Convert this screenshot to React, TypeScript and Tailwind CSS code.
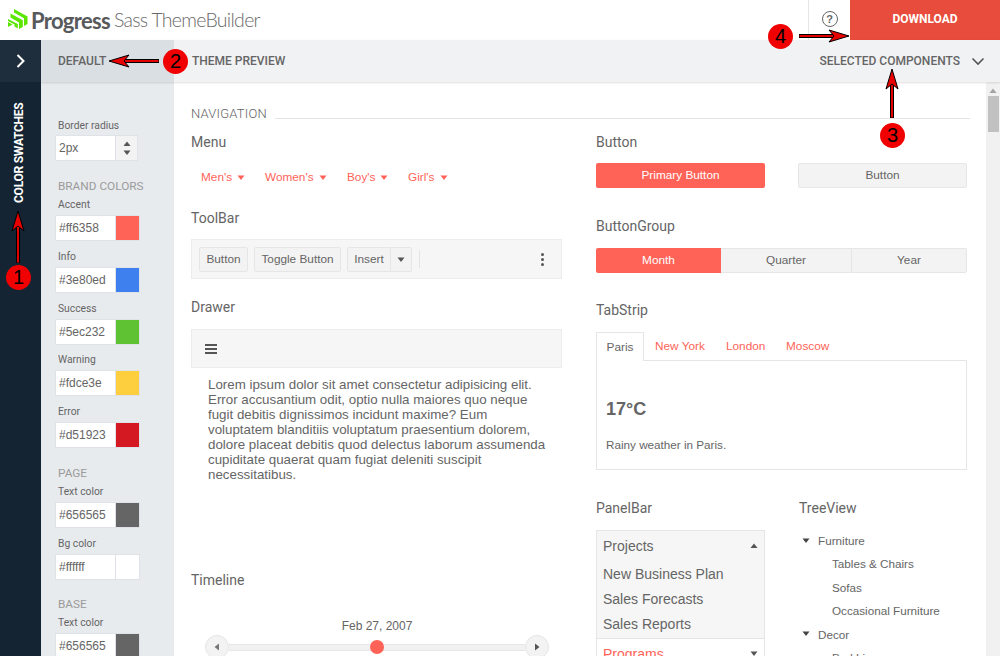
import React from "react";

const arial = "font-['Liberation_Sans',Arial,sans-serif]";
const roboto = "font-['Roboto',sans-serif]";

function Field({ label, value, color }: { label: string; value: string; color: string }) {
  return (
    <div className="mb-[8.75px]">
      <div className="h-[14px] leading-[14px] text-[10.3px] text-[#656565] pl-[3px] mb-[3px]">{label}</div>
      <div className="flex h-[26px] w-[85px] border border-[#dfe2e6] bg-white">
        <div className={`w-[59px] text-[12px] leading-[24px] pl-[3px] text-[#656565] ${arial}`}>{value}</div>
        <div className="flex-1 border-l border-[#dfe2e6]" style={{ background: color }} />
      </div>
    </div>
  );
}

function GroupTitle({ children, top }: { children: React.ReactNode; top: string }) {
  return <div className={`text-[11.8px] leading-[16px] text-[#9a9a9a] pl-[3px] ${top}`}>{children}</div>;
}

function Label({ children, className = "" }: { children: React.ReactNode; className?: string }) {
  return <div className={`text-[14px] leading-[16px] text-[#656565] ${roboto} ${className}`}>{children}</div>;
}

function Caret({ className = "", dir = "down" }: { className?: string; dir?: "down" | "up" | "left" | "right" }) {
  const pts = { down: "0.5,1.5 7.5,1.5 4,6", up: "0.5,6 7.5,6 4,1.5", left: "6,0.5 6,7.5 1.5,4", right: "2,0.5 2,7.5 6.5,4" }[dir];
  return (
    <svg width="8" height="8" viewBox="0 0 8 8" className={`fill-current shrink-0 ${className}`}>
      <polygon points={pts} />
    </svg>
  );
}

function MenuItem({ children, w }: { children: React.ReactNode; w: string }) {
  return (
    <div className={`flex items-center ${w}`}>
      <span>{children}</span>
      <Caret className="ml-[5px]" />
    </div>
  );
}

function Btn({ children, className = "" }: { children: React.ReactNode; className?: string }) {
  return (
    <div className={`h-[25px] pt-[1px] border border-[#e6e6e6] bg-[#f3f3f3] rounded-[2px] flex items-center justify-center text-[11.8px] text-[#656565] ${className}`}>
      {children}
    </div>
  );
}

function Marker({ n, className }: { n: number; className: string }) {
  return (
    <div className={`absolute z-20 w-[25px] h-[25px] rounded-full bg-[#f00000] text-black text-[20px] leading-[25px] text-center ${arial} ${className}`}>
      {n}
    </div>
  );
}

function Arrow({ className, dir, len }: { className: string; dir: "up" | "left" | "right"; len: number }) {
  const horizontal = dir !== "up";
  const w = horizontal ? len : 16;
  const h = horizontal ? 16 : len;
  let head = "";
  let shaft = { x: 0, y: 0, w: 0, h: 0 };
  if (dir === "up") {
    head = `8,0 14,20 8,15 2,20`;
    shaft = { x: 6.5, y: 14, w: 3, h: len - 14 };
  } else if (dir === "left") {
    head = `0,8 20,2 15,8 20,14`;
    shaft = { x: 14, y: 6.5, w: len - 14, h: 3 };
  } else {
    head = `${len},8 ${len - 20},2 ${len - 15},8 ${len - 20},14`;
    shaft = { x: 0, y: 6.5, w: len - 14, h: 3 };
  }
  return (
    <svg width={w} height={h} viewBox={`0 0 ${w} ${h}`} className={`absolute z-20 ${className}`}>
      <rect x={shaft.x} y={shaft.y} width={shaft.w} height={shaft.h} fill="#e00000" stroke="#000" strokeWidth="1" />
      <polygon points={head} fill="#e80000" stroke="#000" strokeWidth="1" />
    </svg>
  );
}

function TreeRow({ children, head = false }: { children: React.ReactNode; head?: boolean }) {
  return (
    <div className={`h-[23.4px] leading-[23.4px] flex items-center text-[11.7px] text-[#656565] ${head ? "" : "pl-[31px]"}`}>
      {head && <Caret className="ml-[1px] mr-[8px] text-[#444]" />}
      <span>{children}</span>
    </div>
  );
}

export default function App() {
  return (
    <div className={`relative w-[1000px] h-[656px] overflow-hidden bg-white flex flex-col ${roboto}`}>
      {/* Header */}
      <header className="h-10 shrink-0 flex items-stretch bg-white">
        <div className="flex items-center flex-1 pl-[8px]">
          <svg width="20" height="20" viewBox="0 0 20 20" className="mr-[3px] mb-[2px]">
            <polygon points="6,0 19.5,7.5 19.5,15 16,17 16,9.2 6,3.6" fill="#5ce500" />
            <polygon points="2.5,4.6 14.8,11.2 14.8,18 11,20 11,13.4 2.5,8.6" fill="#5ce500" />
            <polygon points="0,10 9.8,15 9.8,19.5 6.5,17.6 6.5,15.4 0,12" fill="#5ce500" />
            <polygon points="0,13 4.5,15.5 0,18" fill="#5ce500" />
          </svg>
          <span className="text-[22px] font-bold tracking-[-0.7px] text-[#58595b] font-['Lato',sans-serif]">Progress</span>
          <span className="text-[19.5px] font-light tracking-[-0.7px] text-[#6a6a6a] ml-[4px] font-['Lato',sans-serif]">Sass ThemeBuilder</span>
        </div>
        <div className="w-[42px] border-l border-[#e6e6e6] flex items-center justify-center">
          <div className={`w-[16px] h-[16px] rounded-full border border-[#666] text-[11px] leading-[14px] font-bold text-center text-[#666] mb-[2px] ${arial}`}>?</div>
        </div>
        <div className="w-[150px] bg-[#e74c3c] text-white text-[12px] font-bold flex items-center justify-center pb-[3px]">DOWNLOAD</div>
      </header>

      {/* Body */}
      <div className="flex flex-1 min-h-0">
        {/* Rail */}
        <div className="w-[41px] shrink-0 bg-[#152433] flex flex-col items-center">
          <div className="h-[42px] w-full bg-[#1f2e3d] flex items-center justify-center">
            <svg width="12" height="14" viewBox="0 0 12 14" fill="none" stroke="white" strokeWidth="2">
              <path d="M2.5 1 L8.5 7 L2.5 13" />
            </svg>
          </div>
          <div className="mt-[19px] mr-[3px] [writing-mode:vertical-rl] rotate-180 text-white text-[12.1px] font-bold tracking-[-0.3px] h-[103px] text-center">COLOR SWATCHES</div>
        </div>

        <div className="flex-1 min-w-0 flex flex-col">
          {/* Sub bar */}
          <div className="h-[42px] shrink-0 flex text-[12px] font-medium text-[#656565] shadow-[0_1px_2px_rgba(0,0,0,0.12)] z-10">
            <div className="w-[133px] bg-[#dadfe3] flex items-center pl-[17px]">DEFAULT</div>
            <div className="flex-1 bg-[#f1f2f4] flex items-center pl-[18px] pr-[15px]">
              <span>THEME PREVIEW</span>
              <span className="ml-auto">SELECTED COMPONENTS</span>
              <svg width="14" height="9" viewBox="0 0 14 9" fill="none" stroke="#555" strokeWidth="1.6" className="ml-[11px]">
                <path d="M1.5 1.5 L7 7 L12.5 1.5" />
              </svg>
            </div>
          </div>

          <div className="flex-1 min-h-0 flex">
            {/* Sidebar */}
            <aside className="w-[133px] shrink-0 bg-[#e8ebee] pl-[14px] pt-[37px] overflow-hidden">
              <div className="h-[14px] leading-[14px] text-[10.3px] text-[#656565] pl-[3px] mb-[2px]">Border radius</div>
              <div className="flex h-[26px] w-[83px] border border-[#dfe2e6] bg-white">
                <div className={`w-[59px] text-[12px] leading-[24px] pl-[3px] text-[#656565] ${arial}`}>2px</div>
                <div className="flex-1 bg-[#f3f3f3] border-l border-[#dfe2e6] flex flex-col items-center justify-center gap-[1px] text-[#555]">
                  <Caret dir="up" />
                  <Caret />
                </div>
              </div>
              <GroupTitle top="mt-[17px] mb-[4px]">BRAND COLORS</GroupTitle>
              <Field label="Accent" value="#ff6358" color="#ff6358" />
              <Field label="Info" value="#3e80ed" color="#3e80ed" />
              <Field label="Success" value="#5ec232" color="#5ec232" />
              <Field label="Warning" value="#fdce3e" color="#fdce3e" />
              <Field label="Error" value="#d51923" color="#d51923" />
              <GroupTitle top="mt-[17px] mb-[4px]">PAGE</GroupTitle>
              <Field label="Text color" value="#656565" color="#656565" />
              <Field label="Bg color" value="#ffffff" color="#ffffff" />
              <GroupTitle top="mt-[16px] mb-[4px]">BASE</GroupTitle>
              <Field label="Text color" value="#656565" color="#656565" />
            </aside>

            {/* Main */}
            <main className="flex-1 min-w-0 pl-[17px] pr-[16px] pt-[23px] overflow-hidden">
              <div className="flex items-center h-[18px]">
                <span className="text-[13px] font-light text-[#656565] tracking-[0.2px]">NAVIGATION</span>
                <div className="flex-1 h-[1px] bg-[#e4e4e4] ml-[8px] mt-[8px]" />
              </div>
              <div className="flex gap-[34px] mt-[11px] w-[776px]">
                {/* Left column */}
                <div className="w-[371px] shrink-0">
                  <Label>Menu</Label>
                  <div className={`flex items-center h-[18px] mt-[19px] pl-[10px] text-[11.8px] text-[#ff6358] ${arial}`}>
                    <MenuItem w="w-[64px]">Men's</MenuItem>
                    <MenuItem w="w-[82px]">Women's</MenuItem>
                    <MenuItem w="w-[61px]">Boy's</MenuItem>
                    <MenuItem w="w-auto">Girl's</MenuItem>
                  </div>
                  <Label className="mt-[23px]">ToolBar</Label>
                  <div className={`mt-[13px] h-[40px] border border-[#ececec] bg-[#f6f6f6] flex items-center pl-[7px] pr-[17px] ${arial}`}>
                    <Btn className="w-[49px]">Button</Btn>
                    <Btn className="w-[87px] ml-[6px]">Toggle Button</Btn>
                    <div className="ml-[6px] flex">
                      <Btn className="w-[44px] rounded-r-none">Insert</Btn>
                      <Btn className="w-[21px] border-l-0 rounded-l-none"><Caret className="text-[#555]" /></Btn>
                    </div>
                    <div className="w-[1px] h-[18px] bg-[#e4e4e4] ml-[7px]" />
                    <div className="ml-auto flex flex-col gap-[2px]">
                      <span className="w-[3px] h-[3px] rounded-full bg-[#555]" />
                      <span className="w-[3px] h-[3px] rounded-full bg-[#555]" />
                      <span className="w-[3px] h-[3px] rounded-full bg-[#555]" />
                    </div>
                  </div>
                  <Label className="mt-[20px]">Drawer</Label>
                  <div className="mt-[14px] h-[39px] border border-[#ececec] bg-[#f6f6f6] flex items-center pl-[13px]">
                    <div className="w-[12px] flex flex-col gap-[2px]">
                      <span className="h-[2px] bg-[#555]" />
                      <span className="h-[2px] bg-[#555]" />
                      <span className="h-[2px] bg-[#555]" />
                    </div>
                  </div>
                  <p className={`mt-[9px] pl-[17px] pr-[12px] text-[13.33px] leading-[15px] text-[#656565] ${arial}`}>
                    Lorem ipsum dolor sit amet consectetur adipisicing elit. Error accusantium odit, optio nulla maiores quo neque fugit debitis dignissimos incidunt maxime? Eum voluptatem blanditiis voluptatum praesentium dolorem, dolore placeat debitis quod delectus laborum assumenda cupiditate quaerat quam fugiat deleniti suscipit necessitatibus.
                  </p>
                  <Label className="mt-[90px]">Timeline</Label>
                  <div className={`mt-[30px] text-center text-[12px] leading-[16px] text-[#656565] pl-[1px] ${arial}`}>Feb 27, 2007</div>
                  <div className="flex items-center mt-[1px] pl-[14px] pr-[13px]">
                    <div className="w-[24px] h-[24px] rounded-full border border-[#e6e6e6] bg-[#f3f3f3] flex items-center justify-center text-[#777]"><Caret dir="left" /></div>
                    <div className="flex-1 h-[7px] bg-[#f1f1f1] border-y border-[#e6e6e6] flex items-center justify-center">
                      <span className="w-[14px] h-[14px] rounded-full bg-[#ff6358] shrink-0" />
                    </div>
                    <div className="w-[24px] h-[24px] rounded-full border border-[#e6e6e6] bg-[#f3f3f3] flex items-center justify-center text-[#555]"><Caret dir="right" /></div>
                  </div>
                </div>

                {/* Right column */}
                <div className="w-[371px] shrink-0">
                  <Label>Button</Label>
                  <div className={`flex justify-between mt-[13px] ${arial}`}>
                    <div className="w-[169px] h-[25px] pt-[1px] rounded-[2px] bg-[#ff6358] text-white text-[11.8px] flex items-center justify-center">Primary Button</div>
                    <Btn className="w-[169px]">Button</Btn>
                  </div>
                  <Label className="mt-[30px]">ButtonGroup</Label>
                  <div className={`flex mt-[14px] h-[25px] text-[11.8px] ${arial}`}>
                    <div className="w-[125px] bg-[#ff6358] text-white rounded-l-[2px] flex items-center justify-center">Month</div>
                    <div className="w-[130px] h-[25px] border-y border-[#e6e6e6] bg-[#f3f3f3] text-[#656565] flex items-center justify-center">Quarter</div>
                    <div className="flex-1 border border-[#e6e6e6] bg-[#f3f3f3] text-[#656565] rounded-r-[2px] flex items-center justify-center">Year</div>
                  </div>
                  <Label className="mt-[29px]">TabStrip</Label>
                  <div className={`mt-[14px] flex h-[28px] text-[11.8px] text-[#ff6358] ${arial}`}>
                    <div className="w-[48px] border border-b-0 border-[#e6e6e6] text-[#656565] flex items-center justify-center relative z-10 bg-white h-[29px] pt-[1px]">Paris</div>
                    <div className="flex items-center pl-[11px] pt-[1px] w-[71px]">New York</div>
                    <div className="flex items-center pl-[11px] pt-[1px] w-[60px]">London</div>
                    <div className="flex items-center pl-[11px] pt-[1px]">Moscow</div>
                  </div>
                  <div className={`h-[110px] border border-[#e6e6e6] pl-[9px] text-[#656565] ${arial}`}>
                    <div className="mt-[37px] text-[18px] font-bold leading-[22px]">17°C</div>
                    <div className="mt-[17px] text-[11.7px] leading-[16px]">Rainy weather in Paris.</div>
                  </div>
                  <div className="flex mt-[30px]">
                    <div className="w-[169px] shrink-0">
                      <Label>PanelBar</Label>
                      <div className={`mt-[14px] border-x border-t border-[#e6e6e6] text-[14px] text-[#656565] ${arial}`}>
                        <div className="bg-[#f6f6f6] pb-[1px] border-b border-[#e6e6e6]">
                          <div className="h-[30px] flex items-center pl-[6px] pr-[6px]">
                            <span>Projects</span>
                            <Caret dir="up" className="ml-auto text-[#555]" />
                          </div>
                          <div className="pl-[6px] leading-[25px] pt-[1px] pb-[0px]">
                            <div>New Business Plan</div>
                            <div>Sales Forecasts</div>
                            <div>Sales Reports</div>
                          </div>
                        </div>
                        <div className="h-[30px] flex items-center pl-[6px] pr-[6px] text-[#ff6358]">
                          <span>Programs</span>
                          <Caret className="ml-auto text-[#555]" />
                        </div>
                      </div>
                    </div>
                    <div className="ml-[34px] flex-1">
                      <Label>TreeView</Label>
                      <div className={`mt-[13px] pl-[2px] ${arial}`}>
                        <TreeRow head>Furniture</TreeRow>
                        <TreeRow>Tables &amp; Chairs</TreeRow>
                        <TreeRow>Sofas</TreeRow>
                        <TreeRow>Occasional Furniture</TreeRow>
                        <TreeRow head>Decor</TreeRow>
                        <TreeRow>Bed Linen</TreeRow>
                      </div>
                    </div>
                  </div>
                </div>
              </div>
            </main>

            {/* Scrollbar */}
            <div className="w-[14px] shrink-0 bg-[#f1f1f1] flex flex-col items-center text-[#a3a3a3] pt-[5px]">
              <Caret dir="up" />
              <div className="w-[11px] h-[36px] bg-[#c1c1c1] mt-[1px]" />
            </div>
          </div>
        </div>
      </div>

      {/* Annotations */}
      <Arrow className="left-[10px] top-[211px]" dir="up" len={52} />
      <Marker n={1} className="left-[6px] top-[265px]" />
      <Arrow className="left-[109px] top-[53px]" dir="left" len={50} />
      <Marker n={2} className="left-[163px] top-[49px]" />
      <Arrow className="left-[884px] top-[69px]" dir="up" len={49} />
      <Marker n={3} className="left-[880px] top-[123px]" />
      <Arrow className="left-[799px] top-[28px]" dir="right" len={50} />
      <Marker n={4} className="left-[768px] top-[24px]" />
    </div>
  );
}
